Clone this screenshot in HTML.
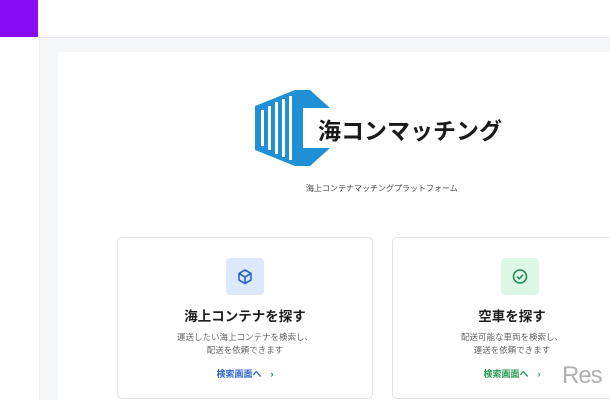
<!DOCTYPE html>
<html><head><meta charset="utf-8"><style>
*{margin:0;padding:0;box-sizing:border-box}
body{width:610px;height:400px;overflow:hidden;background:#fff;font-family:"Liberation Sans","Noto Sans CJK JP",sans-serif;position:relative}
.purple{position:absolute;left:0;top:0;width:38px;height:37px;background:#8a0cf2}
.hdr{position:absolute;left:38px;top:37px;right:0;height:1px;background:#e8e9ee}
.gray{position:absolute;left:39px;top:38px;right:0;bottom:0;background:#f6f7f9;border-left:1px solid #eceef2}
.panel{position:absolute;left:58px;top:52px;right:0;bottom:0;background:#fff}
.logo{position:absolute;left:255px;top:90px}
.lt{position:absolute;left:318px;top:112px;font-size:23px;font-weight:bold;color:#1a1a1a;letter-spacing:0;white-space:nowrap}
.sub{position:absolute;left:306px;top:183px;font-size:8px;color:#444;white-space:nowrap}
.card{position:absolute;top:237px;height:162px;border:1px solid #e3e5ea;border-radius:5px;background:#fff;text-align:center}
.ib{position:absolute;top:20px;width:38px;height:37px;border-radius:4px}
.t{position:absolute;left:0;right:0;top:67px;font-size:13.5px;font-weight:bold;color:#1d1d1d}
.d{position:absolute;left:0;right:0;top:93px;font-size:8.5px;line-height:13px;color:#666}
.l{position:absolute;left:0;right:0;top:129px;font-size:9px;font-weight:bold}
.wm{position:absolute;left:562px;top:362px;font-size:24px;color:#b0b0b0;letter-spacing:-1px}
</style></head><body>
<div class="purple"></div><div class="hdr"></div>
<div class="gray"></div><div class="panel"></div>
<svg class="logo" width="75" height="76" viewBox="0 0 75 76">
<polygon points="0,16 40,0 55,0 75,18 75,40 55,22 55,58 75,42 75,58 55,76 40,76 0,60" fill="#1f8fd6"/>
<rect x="48" y="18" width="27" height="40" fill="#fff"/>
<g fill="#fff"><rect x="6" y="20" width="3" height="36"/><rect x="13" y="16" width="3" height="44"/><rect x="20" y="12" width="3" height="52"/><rect x="27" y="9" width="3" height="58"/><rect x="34" y="6" width="3" height="64"/></g>
</svg>
<div class="lt">海コンマッチング</div>
<div class="sub">海上コンテナマッチングプラットフォーム</div>
<div class="card" style="left:117px;width:256px">
<div class="ib" style="left:108px;background:#dce8fc"><svg width="38" height="37" viewBox="0 0 38 37"><g fill="none" stroke="#2c63c9" stroke-width="1.6" stroke-linejoin="round"><polygon points="19,12 25,15.5 25,22 19,25.5 13,22 13,15.5"/><polyline points="13,15.5 19,19 25,15.5"/><line x1="19" y1="19" x2="19" y2="25.5"/></g></svg></div>
<div class="t">海上コンテナを探す</div>
<div class="d">運送したい海上コンテナを検索し、<br>配送を依頼できます</div>
<div class="l" style="color:#2c63c9">検索画面へ　›</div>
</div>
<div class="card" style="left:392px;width:240px">
<div class="ib" style="left:108px;background:#dcf7e6"><svg width="38" height="37" viewBox="0 0 38 37"><g fill="none" stroke="#1f8a4c" stroke-width="1.6"><circle cx="19" cy="18.5" r="6.5"/><polyline points="16,18.7 18.2,20.8 22,16.8"/></g></svg></div>
<div class="t">空車を探す</div>
<div class="d">配送可能な車両を検索し、<br>運送を依頼できます</div>
<div class="l" style="color:#1f9a4e">検索画面へ　›</div>
</div>
<div class="wm">Res</div>
</body></html>
